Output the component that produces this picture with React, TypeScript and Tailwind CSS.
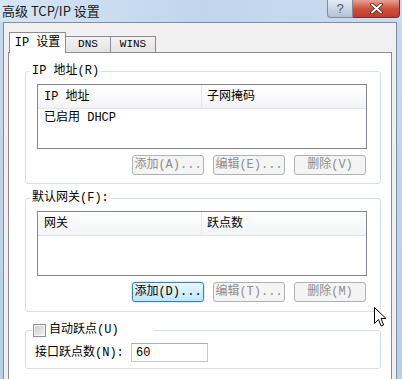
import React from 'react';

const Btn = ({ label, active }: { label: string; active?: boolean }) => (
  <div
    className={
      active
        ? 'w-[72px] h-[20px] flex items-center justify-center rounded-[3px] border border-[#3c7fb1] bg-gradient-to-b from-[#eaf6fd] to-[#bee6fd] text-black shadow-[0_0_2px_#5ec8f5]'
        : 'w-[72px] h-[20px] flex items-center justify-center rounded-[3px] border border-[#adb2b5] bg-[#f4f4f4] text-[#8d8d8d]'
    }
  >
    {label}
  </div>
);

const ListBox = ({ col1, col2, rows }: { col1: string; col2: string; rows: string[] }) => (
  <div className="ml-[11px] mr-[13px] mt-[6px] h-[65px] border border-[#828790] bg-white">
    <div className="h-[24px] flex border-b border-[#e2e2e2] bg-gradient-to-b from-[#ffffff] to-[#f3f4f6]">
      <div className="w-[163px] pl-[6px] flex items-center">{col1}</div>
      <div className="flex-1 pl-[5px] flex items-center border-l border-[#e8e8e8]">{col2}</div>
    </div>
    {rows.map((r) => (
      <div key={r} className="pl-[6px] pt-[2px] leading-[14px]">
        {r}
      </div>
    ))}
  </div>
);

const BtnRow = ({ labels, activeIdx }: { labels: string[]; activeIdx?: number }) => (
  <div className="mt-[6px] mr-[14px] flex justify-end gap-[9px]">
    {labels.map((l, i) => (
      <Btn key={l} label={l} active={i === activeIdx} />
    ))}
  </div>
);

export default function App() {
  return (
    <div className="relative w-[402px] h-[379px] overflow-hidden flex flex-col bg-gradient-to-b from-[#c6d9ee] to-[#b8cfe8] text-[12px] text-black font-['Liberation_Mono','Noto_Sans_CJK_SC',monospace]">
      {/* title bar */}
      <div className="h-[22px] shrink-0 flex items-start bg-gradient-to-r from-[#d6e5f5] via-[#c0d5ec] to-[#cadcf0]">
        <div className="pl-[2px] pt-[3px] leading-[16px] text-[13px] font-['Noto_Sans_CJK_SC',sans-serif] text-[#1a1a1a]">
          高级 TCP/IP 设置
        </div>
        <div className="ml-auto mr-[2px] flex">
          <div className="w-[26px] h-[18px] flex items-center justify-center rounded-bl-[4px] border border-t-0 border-[#7d8b9c] bg-gradient-to-b from-[#e4ebf2] to-[#b3c2d3] text-[13px] leading-none font-['Liberation_Sans',sans-serif] text-[#4b5868]">
            ?
          </div>
          <div className="w-[47px] h-[18px] flex items-center justify-center rounded-br-[4px] border border-t-0 border-l-0 border-[#7c2a22] bg-gradient-to-b from-[#e8a093] via-[#d0503f] to-[#c23a2a]">
            <svg width="13" height="11" viewBox="0 0 13 11">
              <path d="M2 1.5 L11 9.5 M11 1.5 L2 9.5" stroke="#4a1a14" strokeWidth="3.6" strokeLinecap="round" />
              <path d="M2 1.5 L11 9.5 M11 1.5 L2 9.5" stroke="#ffffff" strokeWidth="2" strokeLinecap="round" />
            </svg>
          </div>
        </div>
      </div>

      {/* body */}
      <div className="flex-1 ml-[3px] mr-[5px] border-l border-r border-t border-[#7c8ea3] bg-[#f0f0f0] flex flex-col pl-[4px] pr-[4px] pt-[9px]">
        {/* tabs */}
        <div className="h-[20px] flex items-end pl-[1px]">
          <div className="relative z-10 w-[57px] h-[21px] -mb-[1px] bg-white border border-b-0 border-[#898c95] flex items-center justify-center pb-[1px]">
            IP 设置
          </div>
          <div className="w-[46px] h-[16px] -ml-[1px] border border-b-0 border-[#898c95] bg-gradient-to-b from-[#f3f3f3] to-[#e3e3e3] flex items-center justify-center text-[11px]">
            DNS
          </div>
          <div className="w-[46px] h-[16px] -ml-[1px] border border-b-0 border-[#898c95] bg-gradient-to-b from-[#f3f3f3] to-[#e3e3e3] flex items-center justify-center text-[11px]">
            WINS
          </div>
        </div>

        {/* panel */}
        <div className="flex-1 bg-white border border-b-0 border-[#898c95] pt-[11px] pl-[16px] pr-[10px]">
          <fieldset className="border border-[#d5dfe5] rounded-[3px] pb-[8px]">
            <legend className="ml-[4px] px-[2px] leading-[14px]">IP 地址(R)</legend>
            <ListBox col1="IP 地址" col2="子网掩码" rows={['已启用 DHCP']} />
            <BtnRow labels={['添加(A)...', '编辑(E)...', '删除(V)']} />
          </fieldset>

          <fieldset className="mt-[7px] border border-[#d5dfe5] rounded-[3px] pb-[9px]">
            <legend className="ml-[4px] px-[2px] leading-[14px]">默认网关(F):</legend>
            <ListBox col1="网关" col2="跃点数" rows={[]} />
            <BtnRow labels={['添加(D)...', '编辑(T)...', '删除(M)']} activeIdx={0} />
          </fieldset>

          <fieldset className="mt-[11px] border border-[#d5dfe5] rounded-[3px] pb-[6px]">
            <legend className="ml-[6px] pl-[1px] w-[121px] leading-[14px] flex items-center">
              <span className="w-[13px] h-[13px] border border-[#8e8f8f] bg-gradient-to-br from-[#cbcbcb] to-[#f4f4f4] shadow-[inset_0_0_0_1px_#f4f4f4] shrink-0" />
              <span className="ml-[3px]">自动跃点(U)</span>
            </legend>
            <div className="mt-[6px] ml-[9px] flex items-center">
              <div className="w-[96px]">接口跃点数(N):</div>
              <div className="w-[77px] h-[19px] border border-[#c4c8ce] border-t-[#abadb3] bg-white pl-[4px] flex items-center">
                60
              </div>
            </div>
          </fieldset>
        </div>
      </div>

      {/* mouse cursor */}
      <svg className="absolute left-[374px] top-[307px]" width="13" height="21" viewBox="0 0 13 21">
        <path
          d="M0.5 0.5 L0.5 16.5 L4.5 12.5 L7.2 19 L9.6 18 L7 11.5 L12 11.5 Z"
          fill="#ffffff"
          stroke="#000000"
          strokeWidth="1"
          strokeLinejoin="round"
        />
      </svg>
    </div>
  );
}
